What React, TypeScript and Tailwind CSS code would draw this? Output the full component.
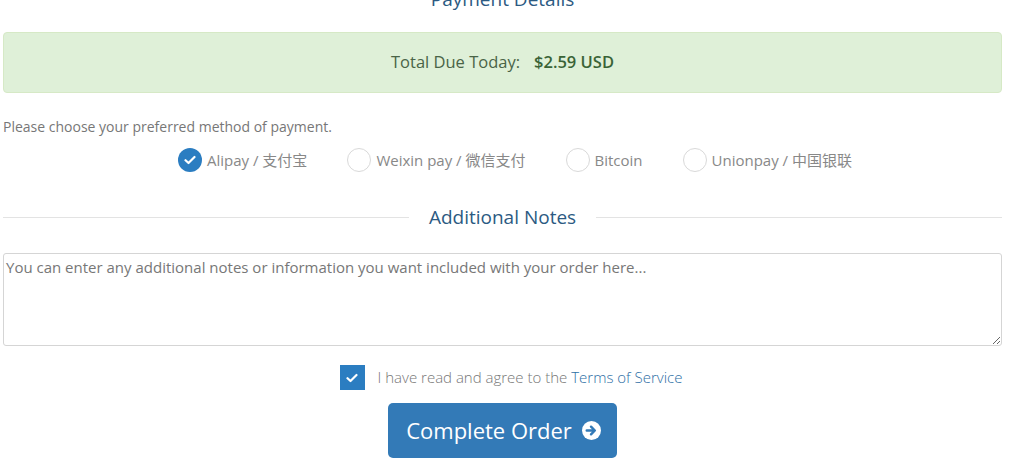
import { useState } from "react";

const methods = [
  { id: "alipay", label: "Alipay / 支付宝" },
  { id: "weixin", label: "Weixin pay / 微信支付" },
  { id: "bitcoin", label: "Bitcoin" },
  { id: "unionpay", label: "Unionpay / 中国银联" },
];

function CheckMark() {
  return (
    <svg width="12" height="10" viewBox="0 0 12 10" fill="none">
      <path d="M1.5 5.2 4.5 8 10.5 2" stroke="white" strokeWidth="2.2" strokeLinecap="round" strokeLinejoin="round" />
    </svg>
  );
}

export default function App() {
  const [method, setMethod] = useState("alipay");
  const [agreed, setAgreed] = useState(true);

  return (
    <div className="min-h-[474px] overflow-hidden bg-white font-['Open_Sans','Noto_Sans_CJK_SC',sans-serif]">
      <div className="ml-[3px] w-[999px]">
        {/* heading, cut off at top */}
        <h2 className="-mt-[13px] text-center text-[19px] leading-[24px] text-[#2c5a82]">
          Payment Details
        </h2>

        {/* total due */}
        <div className="mt-[21px] flex h-[61px] items-center justify-center rounded-[4px] border border-[#d6e9c6] bg-[#dff0d8] text-[16.5px] text-[#4a6447]">
          Total Due Today:
          <span className="ml-[14px] font-semibold text-[#3a6336]">$2.59 USD</span>
        </div>

        <p className="mt-[24px] text-[14px] leading-[20px] text-[#777]">
          Please choose your preferred method of payment.
        </p>

        {/* payment methods */}
        <div className="mt-[11px] flex h-[24px] items-center justify-center gap-[40px] pl-[25px]">
          {methods.map((m) => {
            const active = method === m.id;
            return (
              <label
                key={m.id}
                onClick={() => setMethod(m.id)}
                className="flex cursor-pointer items-center gap-[5px] text-[15px] text-[#888]"
              >
                <span
                  className={
                    active
                      ? "flex h-[24px] w-[24px] items-center justify-center rounded-full bg-[#2b7dc1]"
                      : "h-[24px] w-[24px] rounded-full border border-[#d9d9d9] bg-white"
                  }
                >
                  {active && <CheckMark />}
                </span>
                {m.label}
              </label>
            );
          })}
        </div>

        {/* divider */}
        <div className="mt-[33px] flex h-[24px] items-center gap-[20px]">
          <div className="h-px flex-1 bg-[#e3e3e3]" />
          <span className="text-[19px] text-[#2c5a82]">Additional Notes</span>
          <div className="h-px flex-1 bg-[#e3e3e3]" />
        </div>

        <textarea
          className="mt-[24px] block h-[93px] w-full rounded-[3px] border border-[#d5d5d5] px-[2px] py-[2px] text-[15px] text-[#555] placeholder:text-[#777] focus:outline-none"
          placeholder="You can enter any additional notes or information you want included with your order here..."
        />

        {/* terms */}
        <div className="mt-[19px] flex items-center justify-center gap-[13px] pl-[17px]">
          <span
            onClick={() => setAgreed(!agreed)}
            className={
              agreed
                ? "flex h-[25px] w-[25px] cursor-pointer items-center justify-center bg-[#2b7dc1]"
                : "h-[25px] w-[25px] cursor-pointer border border-[#ccc] bg-white"
            }
          >
            {agreed && <CheckMark />}
          </span>
          <span className="text-[15px] font-light text-[#777]">
            I have read and agree to the{" "}
            <a href="#" className="text-[#2d6ea5]">
              Terms of Service
            </a>
          </span>
        </div>

        <div className="mt-[13px] flex justify-center">
          <button className="flex h-[55px] w-[229px] items-center justify-center gap-[10px] rounded-[5px] bg-[#337ab7] pl-[2px] text-[22px] text-white">
            Complete Order
            <svg width="19" height="19" viewBox="0 0 20 20">
              <circle cx="10" cy="10" r="10" fill="white" />
              <path d="M5 10h8M9.5 6l4 4-4 4" stroke="#337ab7" strokeWidth="2.6" fill="none" strokeLinecap="round" strokeLinejoin="round" />
            </svg>
          </button>
        </div>
      </div>
    </div>
  );
}
